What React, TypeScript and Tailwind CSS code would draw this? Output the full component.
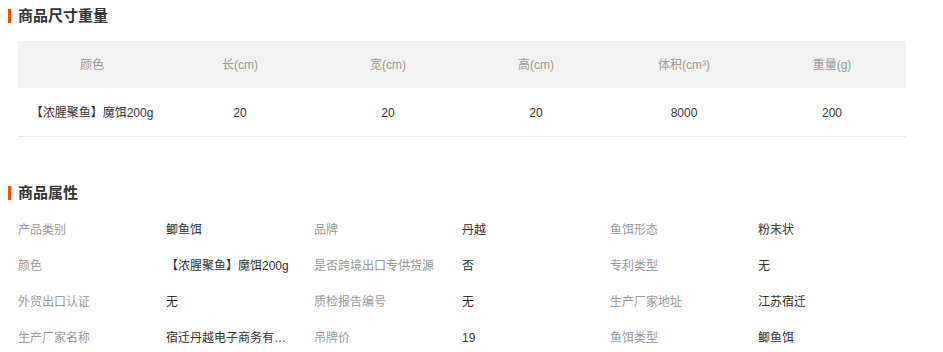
import React from "react"

const sizeHead = ["颜色", "长(cm)", "宽(cm)", "高(cm)", "体积(cm³)", "重量(g)"]
const sizeRow = ["【浓腥聚鱼】魔饵200g", "20", "20", "20", "8000", "200"]

const attrs: [string, string][] = [
  ["产品类别", "鲫鱼饵"],
  ["品牌", "丹越"],
  ["鱼饵形态", "粉末状"],
  ["颜色", "【浓腥聚鱼】魔饵200g"],
  ["是否跨境出口专供货源", "否"],
  ["专利类型", "无"],
  ["外贸出口认证", "无"],
  ["质检报告编号", "无"],
  ["生产厂家地址", "江苏宿迁"],
  ["生产厂家名称", "宿迁丹越电子商务有限公司"],
  ["吊牌价", "19"],
  ["鱼饵类型", "鲫鱼饵"],
]

const SectionTitle = ({ title }: { title: string }) => (
  <div className="flex h-4 items-center pl-2">
    <span className="h-[14px] w-[3px] bg-[#ff4a00]" />
    <h2 className="ml-[7px] text-[15px] leading-4 font-bold text-[#333]">{title}</h2>
  </div>
)

const App = () => {
  return (
    <div
      className="h-[352px] w-[943px] overflow-hidden bg-white pt-2"
      style={{ fontFamily: '"Liberation Sans", "Noto Sans CJK SC", sans-serif' }}
    >
      <SectionTitle title="商品尺寸重量" />

      <div className="mt-[17px] ml-[18px] w-[888px] text-xs">
        <div className="grid h-[47px] grid-cols-6 items-center bg-[#f2f2f2] text-[#999]">
          {sizeHead.map((h) => (
            <div key={h} className="text-center">
              {h}
            </div>
          ))}
        </div>
        <div className="grid h-[49px] grid-cols-6 items-center border-b border-[#e8e8e8] pt-[2px] text-[#333]">
          {sizeRow.map((v, i) => (
            <div key={i} className="text-center">
              {v}
            </div>
          ))}
        </div>
      </div>

      <div className="mt-[48px]">
        <SectionTitle title="商品属性" />
      </div>

      <div className="mt-[11px] ml-[18px] grid w-[888px] grid-cols-6 text-xs">
        {attrs.map(([label, value]) => (
          <React.Fragment key={label}>
            <div className="flex h-9 items-center text-[#999]">{label}</div>
            <div className="flex h-9 min-w-0 items-center pr-4 text-[#333]">
              <span className="truncate">{value}</span>
            </div>
          </React.Fragment>
        ))}
      </div>
    </div>
  )
}

export default App
